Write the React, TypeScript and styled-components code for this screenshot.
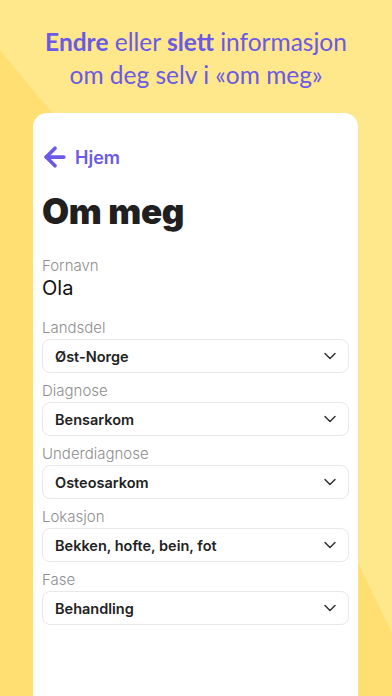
import React from "react";
import styled, { createGlobalStyle } from "styled-components";
import { ArrowLeft, ChevronDown } from "lucide-react";

const GlobalStyle = createGlobalStyle`
  html, body {
    margin: 0;
    padding: 0;
    background: #ffe78b;
  }
  * { box-sizing: border-box; }
`;

const Page = styled.div`
  position: relative;
  width: 392px;
  height: 696px;
  overflow: hidden;
  background: #ffe78b;
  font-family: "Inter", "Liberation Sans", sans-serif;
`;

const Backdrop = styled.svg`
  position: absolute;
  inset: 0;
  z-index: 0;
`;

const Content = styled.div`
  position: relative;
  z-index: 1;
  display: flex;
  flex-direction: column;
  padding-top: 25px;
  height: 100%;
`;

const Headline = styled.h1`
  margin: 0;
  text-align: center;
  font-family: "Lato", "Liberation Sans", sans-serif;
  font-weight: 400;
  font-size: 24.5px;
  line-height: 33px;
  color: #6a5ae6;
  b { font-weight: 700; }
`;

const Card = styled.div`
  flex: 1;
  margin: 22px 34px 0 33px;
  background: #ffffff;
  border-radius: 14px 14px 0 0;
  padding: 32px 9px 0 9px;
  display: flex;
  flex-direction: column;
`;

const BackLink = styled.a`
  display: flex;
  align-items: center;
  gap: 5px;
  height: 24px;
  margin-left: -2px;
  color: #6a5ae6;
  font-weight: 600;
  font-size: 18px;
  text-decoration: none;
`;

const Title = styled.h2`
  margin: 20px 0 0 0;
  font-weight: 900;
  font-size: 35px;
  line-height: 44px;
  color: #202020;
  letter-spacing: -0.3px;
`;

const Label = styled.div<{ $first?: boolean }>`
  margin-top: ${(p) => (p.$first ? "23px" : "8px")};
  font-size: 15px;
  line-height: 20px;
  font-weight: 300;
  color: #8e8e8e;
`;

const Value = styled.div`
  margin-bottom: 10px;
  font-size: 20px;
  line-height: 24px;
  color: #111111;
`;

const Select = styled.div`
  margin-top: 1px;
  height: 34px;
  border: 1px solid #e8e8e8;
  border-radius: 8px;
  display: flex;
  align-items: center;
  justify-content: space-between;
  padding: 0 8px 0 12px;
  font-weight: 600;
  font-size: 14.5px;
  color: #222222;
`;

const fields = [
  { label: "Landsdel", value: "Øst-Norge" },
  { label: "Diagnose", value: "Bensarkom" },
  { label: "Underdiagnose", value: "Osteosarkom" },
  { label: "Lokasjon", value: "Bekken, hofte, bein, fot" },
  { label: "Fase", value: "Behandling" },
];

export default function App() {
  return (
    <Page>
      <GlobalStyle />
      <Backdrop width="392" height="696" viewBox="0 0 392 696">
        <polygon points="0,50 200,292 200,696 0,696" fill="#ffdf72" />
        <polygon points="330,505 392,633 392,696 330,696" fill="#ffdf72" />
      </Backdrop>
      <Content>
        <Headline>
          <b>Endre</b> eller <b>slett</b> informasjon
          <br />
          om deg selv i «om meg»
        </Headline>
        <Card>
          <BackLink href="#">
            <ArrowLeft size={30} strokeWidth={3} />
            Hjem
          </BackLink>
          <Title>Om meg</Title>
          <Label $first>Fornavn</Label>
          <Value>Ola</Value>
          {fields.map((f) => (
            <React.Fragment key={f.label}>
              <Label>{f.label}</Label>
              <Select>
                {f.value}
                <ChevronDown size={20} strokeWidth={1.8} color="#333" />
              </Select>
            </React.Fragment>
          ))}
        </Card>
      </Content>
    </Page>
  );
}
